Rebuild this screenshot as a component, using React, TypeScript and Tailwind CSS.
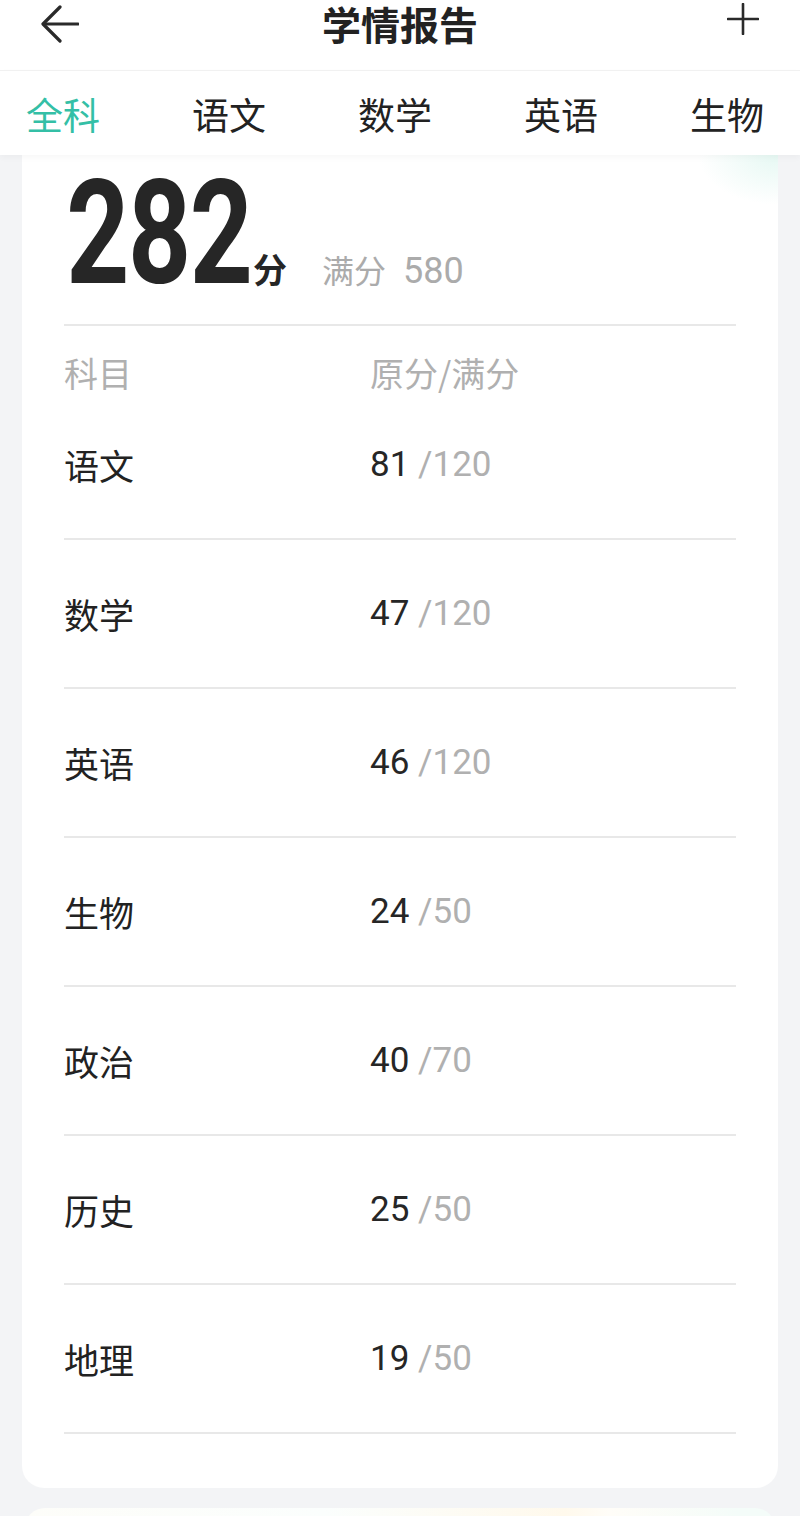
import React from "react";

const rows = [
  { name: "语文", score: 81, full: 120 },
  { name: "数学", score: 47, full: 120 },
  { name: "英语", score: 46, full: 120 },
  { name: "生物", score: 24, full: 50 },
  { name: "政治", score: 40, full: 70 },
  { name: "历史", score: 25, full: 50 },
  { name: "地理", score: 19, full: 50 },
];

const tabs = ["全科", "语文", "数学", "英语", "生物"];

const cjk = "font-['Noto_Sans_CJK_SC','Noto_Sans',sans-serif]";

export default function App() {
  return (
    <div className={`h-[1516px] w-[800px] overflow-hidden bg-[#f3f4f6] ${cjk}`}>
      {/* Header */}
      <div className="grid h-[70px] grid-cols-[1fr_auto_1fr] bg-white">
        <div className="flex items-start">
          <svg
            className="ml-[41px] mt-[5px]"
            width="38"
            height="38"
            viewBox="0 0 38 38"
            fill="none"
            stroke="#2a2a2a"
            strokeWidth="3.2"
            strokeLinecap="round"
            strokeLinejoin="round"
          >
            <path d="M37 19H3" />
            <path d="M19 2L2 19l17 17" />
          </svg>
        </div>
        <div className="pt-[1px] text-[39px] font-bold leading-[44px] text-[#222]">学情报告</div>
        <div className="flex items-start justify-end">
          <svg
            className="mr-[41px] mt-[3px]"
            width="32"
            height="32"
            viewBox="0 0 32 32"
            fill="none"
            stroke="#2a2a2a"
            strokeWidth="2.6"
            strokeLinecap="round"
          >
            <path d="M16 1v30" />
            <path d="M1 16h30" />
          </svg>
        </div>
      </div>

      {/* Tabs */}
      <div className="relative z-10 flex h-[85px] items-center gap-[92px] border-t border-[#f1f1f1] bg-white pl-[26px] shadow-[0_3px_6px_rgba(0,0,0,0.03)]">
        {tabs.map((t, i) => (
          <div
            key={t}
            className={`w-[74px] shrink-0 pt-[2px] text-[37px] leading-[44px] ${
              i === 0 ? "text-[#34bfa6]" : "text-[#222]"
            }`}
          >
            {t}
          </div>
        ))}
      </div>

      {/* Card */}
      <div className="mx-[22px] rounded-b-[22px] bg-white bg-[radial-gradient(ellipse_80px_50px_at_100%_0%,#e6f8f3_0%,#ffffff_100%)] px-[42px] pb-[54px] pt-[6px]">
        <div className="flex h-[145px] items-baseline">
          <div className="w-[189px] shrink-0">
            <span className="inline-block origin-bottom-left scale-x-[0.76] pl-[3px] font-['Roboto','Liberation_Sans',sans-serif] text-[145px] font-bold leading-none tracking-[-2px] text-[#262626]">
              282
            </span>
          </div>
          <span className="text-[34px] font-bold leading-none text-[#262626]">分</span>
          <span className="ml-[35px] text-[32px] leading-none text-[#ababab]">
            满分
            <span className="ml-[17px] font-['Roboto',sans-serif] text-[36px]">580</span>
          </span>
        </div>

        <div className="mt-[18px] h-[2px] bg-[#e8e8e8]" />

        <div className="flex h-[65px] pt-[27px] text-[34px] leading-[40px] text-[#b0b0b0]">
          <div className="w-[306px]">科目</div>
          <div>原分/满分</div>
        </div>

        {rows.map((r) => (
          <div
            key={r.name}
            className="flex h-[149px] items-center border-b-2 border-[#e8e8e8] text-[35px] leading-[44px]"
          >
            <div className="w-[306px] text-[#222]">{r.name}</div>
            <div className="font-['Roboto',sans-serif] text-[#262626]">
              {r.score} <span className="text-[#b0b0b0]">/{r.full}</span>
            </div>
          </div>
        ))}
      </div>

      {/* Next card peek */}
      <div className="mx-[25px] mt-[20px] h-[60px] rounded-t-[20px] bg-[linear-gradient(90deg,#fdfdf9_0%,#fbfefd_40%,#fff9ec_72%,#fffdf8_78%,#f4fcf9_95%)]" />
    </div>
  );
}
